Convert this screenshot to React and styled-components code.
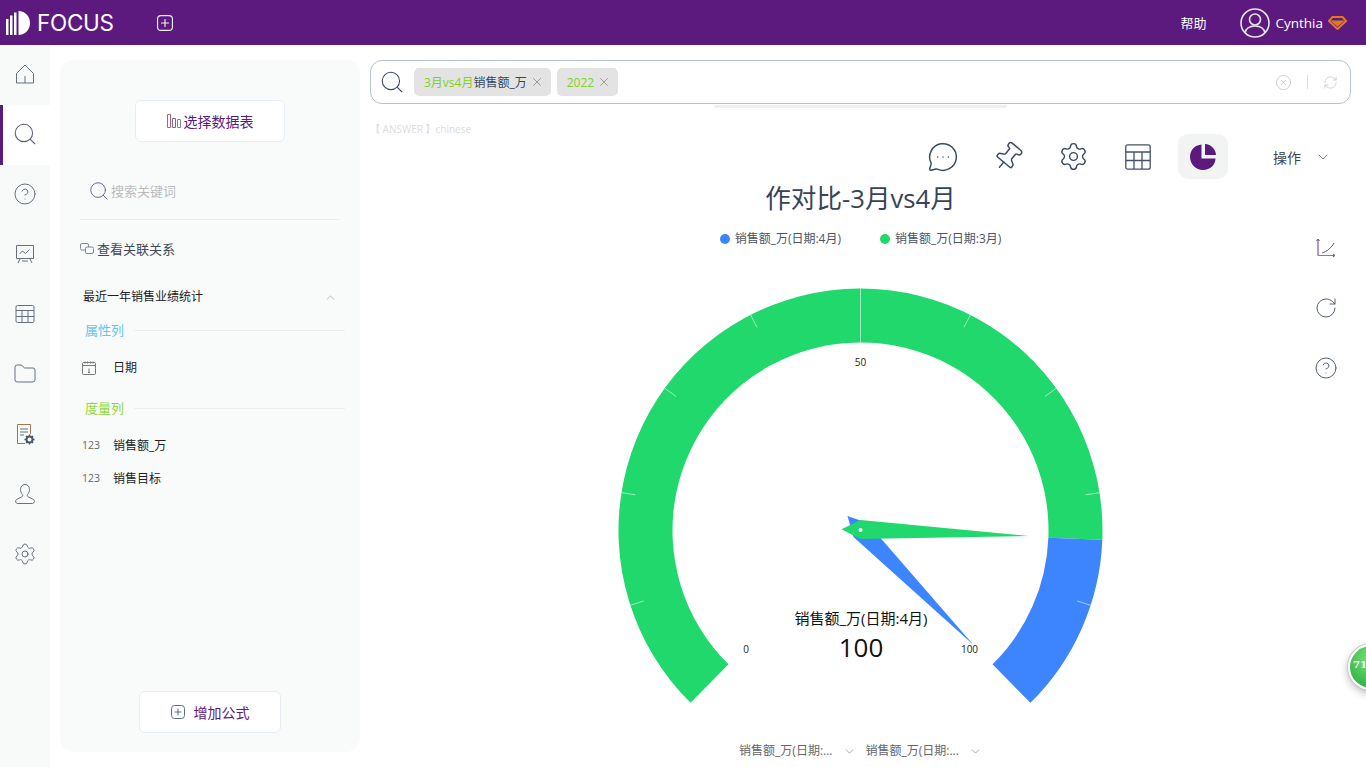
import React from 'react';
import styled, { createGlobalStyle } from 'styled-components';
import {
  ChevronDown,
  ChevronUp,
  CircleHelp,
  CircleX,
  Folder,
  MessageCircleMore,
  Pin,
  RefreshCw,
  RotateCw,
  Search,
  Settings,
  X,
} from 'lucide-react';

const GlobalStyle = createGlobalStyle`
  html, body {
    margin: 0;
    padding: 0;
    height: 100%;
    overflow: hidden;
    background: #fff;
    font-family: "Open Sans", "Noto Sans CJK SC", sans-serif;
  }
  * { box-sizing: border-box; }
`;

const HomeIcon = () => (
  <svg width="20" height="20" viewBox="0 0 20 20" fill="none" stroke="#66707e" strokeWidth="1">
    <path d="M1.5 9.5 10 1l8.5 8.5V19h-17z" />
    <path d="M10 12v7" />
  </svg>
);

const BoardIcon = () => (
  <svg width="20" height="20" viewBox="0 0 20 20" fill="none" stroke="#66707e" strokeWidth="1">
    <path d="M1.5 1.5h17v13h-17z" />
    <path d="M4.5 10l3-3 3 2.5 4-4" />
    <path d="M5 15l-2 4M15 15l2 4M7 17h6" />
  </svg>
);

const GridIcon = () => (
  <svg width="20" height="20" viewBox="0 0 20 20" fill="none" stroke="#66707e" strokeWidth="1">
    <rect x="1" y="1.5" width="18" height="17" rx="1.5" />
    <path d="M1 6.5h18M1 12.5h18M7 6.5v12M13 6.5v12" />
  </svg>
);

const ReportIcon = () => (
  <svg width="20" height="22" viewBox="0 0 20 22" fill="none" stroke="#66707e" strokeWidth="1">
    <path d="M10 20.5H2.5v-19h13V11" stroke="#a2734f" />
    <path d="M5 6h8M5 9h8M5 12h4" />
    <circle cx="14.5" cy="16.5" r="3" strokeWidth="2" stroke="#4d5764" />
    <path d="M14.5 11.500v2M14.500 19.500v2M9.500 16.500h2M17.500 16.500h2M11 13l1.400 1.400M16.600 18.600l1.400 1.400M11 20l1.400-1.400M16.600 14.400l1.400-1.400" stroke="#4d5764" strokeWidth="1.400" />
  </svg>
);

const UserIcon = () => (
  <svg width="22" height="22" viewBox="0 0 22 22" fill="none" stroke="#66707e" strokeWidth="1">
    <path d="M11 1.5c-3 0-4.5 2.4-4.5 5 0 2 .8 3.6 2 5 .4.8.2 1.8-.6 2.3L2.5 16.500c-1.500 1-1.200 3.800 1 4h15c2.200-.2 2.500-3 1-4l-5.400-2.700c-.8-.5-1-1.500-.6-2.300 1.200-1.400 2-3 2-5 0-2.600-1.500-5-4.500-5z" />
  </svg>
);

const BarsIcon = () => (
  <svg width="14" height="14" viewBox="0 0 14 14" fill="none" strokeWidth="1">
    <path d="M.5 .5h3v13h-3z" stroke="#b5616f" />
    <path d="M5.500 4.500h3v9h-3z" stroke="#7a6a9a" />
    <path d="M10.500 5.500h3v8h-3z" stroke="#8a7fa0" />
  </svg>
);

const PlusBox = ({ size = 14, color = '#5d6b86' }) => (
  <svg width={size} height={size} viewBox="0 0 14 14" fill="none" stroke={color} strokeWidth="1">
    <rect x=".5" y=".5" width="13" height="13" rx="3" />
    <path d="M7 3.500v7M3.500 7h7" />
  </svg>
);

const LinkIcon = () => (
  <svg width="14" height="12" viewBox="0 0 14 12" fill="none" stroke="#7d8794" strokeWidth="1">
    <rect x=".5" y=".5" width="8" height="6.500" rx="1.500" />
    <rect x="5.500" y="4" width="8" height="6.500" rx="1.500" fill="#f9fbfb" />
  </svg>
);

const CalendarIcon = () => (
  <svg width="14" height="14" viewBox="0 0 14 14" fill="none" stroke="#777" strokeWidth="1">
    <rect x=".5" y="1.500" width="13" height="12" rx="1" />
    <path d="M.5 4.500h13M3 .5v2M5.500 .5v2M8.500 .5v2M11 .5v2M7 7.500v4M6 11.500h2" />
  </svg>
);

const AxesIcon = () => (
  <svg width="20" height="24" viewBox="0 -2 20 24" fill="none" strokeWidth="1">
    <path d="M2 1v16.500" stroke="#6a2c8c" />
    <path d="M2 17.500h17" stroke="#7d7f90" />
    <path d="M.5 3 2 1l1.500 2M17 16l2 1.500-2 1.500" stroke="#55607a" />
    <path d="M6 15c5-1.500 10-6 12-10" stroke="#55607a" />
  </svg>
);

const TableIcon = () => (
  <svg width="26" height="26" viewBox="0 0 26 26" fill="none" stroke="#46506a" strokeWidth="1.300">
    <rect x=".8" y=".8" width="24.400" height="24.400" rx="2" />
    <path d="M.8 8h24.400M.8 16.500h24.400M9 8v17M17 8v17" />
  </svg>
);

const PieIcon = () => (
  <svg width="26" height="26" viewBox="0 0 26 26" fill="#5c1a7e">
    <path d="M11.500 0.500v14h14C25.500 21 20 26 13 26 6 26 0 20 0 13 0 6 5 1 11.500 .5z" />
    <path d="M15 0c6 .5 10.500 5 11 11H15z" />
  </svg>
);

const LogoMark = () => (
  <svg width="24" height="24" viewBox="0 0 24 24" fill="#fff">
    <path d="M0 8h2.500v16H0zM4 4.500h2.500V24H4zM8 1.500h2.500V24H8z" />
    <path d="M12.500 0c6.500 0 11.500 5.200 11.500 12s-5 12-11.500 12z" />
  </svg>
);

const AvatarIcon = () => (
  <svg width="30" height="30" viewBox="0 0 30 30" fill="none" stroke="#e8e4ee" strokeWidth="1.600">
    <circle cx="15" cy="15" r="14" />
    <circle cx="15" cy="11.500" r="5.500" />
    <path d="M5 25c1-5 5-7 10-7s9 2 10 7" />
  </svg>
);

const DiamondIcon = () => (
  <svg width="19" height="14" viewBox="0 0 19 14" fill="none" stroke="#e0791b" strokeWidth="2">
    <path d="M4.500 1h10L18 5l-8.500 8L1 5z" />
    <path d="M5 5.500h9l-4.500 4z" fill="#e0791b" />
  </svg>
);

const navItems = [
  { key: 'home', icon: <HomeIcon /> },
  { key: 'search', icon: <Search size={26} strokeWidth={1} color="#5a5f86" />, active: true },
  { key: 'help', icon: <CircleHelp size={24} strokeWidth={1} color="#66707e" /> },
  { key: 'board', icon: <BoardIcon /> },
  { key: 'grid', icon: <GridIcon /> },
  { key: 'folder', icon: <Folder size={24} strokeWidth={1} color="#66707e" /> },
  { key: 'report', icon: <ReportIcon /> },
  { key: 'user', icon: <UserIcon /> },
  { key: 'settings', icon: <Settings size={24} strokeWidth={1} color="#66707e" /> },
];

const CX = 259.5;
const CY = 260.5;
const OUTER = 242;
const INNER = 188;

const polar = (r, deg) => {
  const a = (deg * Math.PI) / 180;
  return [CX + r * Math.cos(a), CY - r * Math.sin(a)];
};

const bandPath = (from, to) => {
  const [x1, y1] = polar(OUTER, from);
  const [x2, y2] = polar(OUTER, to);
  const [x3, y3] = polar(INNER, to);
  const [x4, y4] = polar(INNER, from);
  const large = from - to > 180 ? 1 : 0;
  return `M${x1} ${y1}A${OUTER} ${OUTER} 0 ${large} 1 ${x2} ${y2}L${x3} ${y3}A${INNER} ${INNER} 0 ${large} 0 ${x4} ${y4}Z`;
};

const ticks = [1, 2, 3, 4, 6, 7, 8, 9].map((i) => 225 - i * 27);

const Gauge = () => {
  const [tx, ty] = polar(OUTER, 90);
  const [bx, by] = polar(INNER, 90);
  return (
    <GaugeSvg viewBox="0 0 520 460">
      <path d={bandPath(225.4, -2.2)} fill="#20d86c" />
      <path d={bandPath(-2.2, -45.4)} fill="#3d85ff" />
      <line x1={tx} y1={ty} x2={bx} y2={by} stroke="#fff" strokeOpacity=".55" />
      {ticks.map((deg) => {
        const [x1, y1] = polar(OUTER, deg);
        const [x2, y2] = polar(OUTER - 14, deg);
        return <line key={deg} x1={x1} y1={y1} x2={x2} y2={y2} stroke="#fff" strokeOpacity=".55" />;
      })}
      <polygon points="246.500,246 266.500,253 372.500,375 252.500,267" fill="#3d85ff" />
      <polygon points="240.500,259.300 259.500,250 427.500,266 259.500,269" fill="#20d86c" />
      <circle cx={CX} cy="260" r="2" fill="#fff" />
      <GaugeTick x="259.500" y="96">50</GaugeTick>
      <GaugeTick x="145" y="383">0</GaugeTick>
      <GaugeTick x="368.500" y="383">100</GaugeTick>
      <GaugeName x="260" y="354">销售额_万(日期:4月)</GaugeName>
      <GaugeValue x="260" y="387">100</GaugeValue>
    </GaugeSvg>
  );
};

const App = () => (
  <Page>
    <GlobalStyle />
    <Header>
      <LogoMark />
      <LogoText>FOCUS</LogoText>
      <NewTab>
        <PlusBox size={16} color="#f2edf6" />
      </NewTab>
      <HeaderRight>
        <HelpLink>帮助</HelpLink>
        <AvatarIcon />
        <UserName>Cynthia</UserName>
        <DiamondIcon />
      </HeaderRight>
    </Header>

    <Body>
      <NavRail>
        {navItems.map((item) => (
          <NavItem key={item.key} $active={item.active}>
            {item.icon}
          </NavItem>
        ))}
      </NavRail>

      <SidePanel>
        <OutlineButton $width={150} $gap={3}>
          <BarsIcon />
          选择数据表
        </OutlineButton>
        <KeywordSearch>
          <Search size={22} strokeWidth={1} color="#5a5f86" />
          <span>搜索关键词</span>
        </KeywordSearch>
        <RelationLink>
          <LinkIcon />
          查看关联关系
        </RelationLink>
        <TableHead>
          最近一年销售业绩统计
          <ChevronUp size={13} strokeWidth={1} color="#888" />
        </TableHead>
        <GroupHead $color="#62c6f0" $top={15}>属性列</GroupHead>
        <FieldRow $top={18}>
          <FieldType>
            <CalendarIcon />
          </FieldType>
          日期
        </FieldRow>
        <GroupHead $color="#8fd93f" $top={21}>度量列</GroupHead>
        <FieldRow $top={18}>
          <FieldType>123</FieldType>
          销售额_万
        </FieldRow>
        <FieldRow $top={12}>
          <FieldType>123</FieldType>
          销售目标
        </FieldRow>
        <AddFormula>
          <OutlineButton $width={142} $gap={9}>
            <PlusBox />
            增加公式
          </OutlineButton>
        </AddFormula>
      </SidePanel>

      <Main>
        <SearchBox>
          <Search size={26} strokeWidth={1} color="#3f4a6a" />
          <Chip>
            <span>
              <ChipAccent>3月vs4月</ChipAccent>销售额_万
            </span>
            <X size={14} strokeWidth={1} color="#666" />
          </Chip>
          <Chip>
            <ChipAccent>2022</ChipAccent>
            <X size={14} strokeWidth={1} color="#666" />
          </Chip>
          <SearchTools>
            <CircleX size={17} strokeWidth={1} color="#bbb" />
            <ToolDivider />
            <RefreshCw size={15} strokeWidth={1} color="#bbb" />
          </SearchTools>
        </SearchBox>
        <SuggestLine />
        <AnswerTag>【 ANSWER 】chinese</AnswerTag>

        <Toolbar>
          <ToolButton>
            <MessageCircleMore size={32} strokeWidth={1.100} color="#3a4a60" />
          </ToolButton>
          <ToolButton>
            <PinTilted>
              <Pin size={32} strokeWidth={1.100} color="#3a4a60" />
            </PinTilted>
          </ToolButton>
          <ToolButton>
            <Settings size={31} strokeWidth={1.100} color="#3a4a60" />
          </ToolButton>
          <ToolButton>
            <TableIcon />
          </ToolButton>
          <ToolButton $active>
            <PieIcon />
          </ToolButton>
          <ActionMenu>
            操作
            <ChevronDown size={16} strokeWidth={1} color="#444" />
          </ActionMenu>
        </Toolbar>

        <ChartArea>
          <ChartTitle>作对比-3月vs4月</ChartTitle>
          <Legend>
            <LegendItem $color="#3d85ff">销售额_万(日期:4月)</LegendItem>
            <LegendItem $color="#20d86c">销售额_万(日期:3月)</LegendItem>
          </Legend>
          <Gauge />
          <SelectRow>
            <SeriesSelect>
              <span>销售额_万(日期:...</span>
              <ChevronDown size={13} strokeWidth={1} color="#666" />
            </SeriesSelect>
            <SeriesSelect>
              <span>销售额_万(日期:...</span>
              <ChevronDown size={13} strokeWidth={1} color="#666" />
            </SeriesSelect>
          </SelectRow>
          <ChartRail>
            <AxesIcon />
            <RotateCw size={24} strokeWidth={1} color="#55607a" />
            <CircleHelp size={24} strokeWidth={1} color="#55607a" />
          </ChartRail>
        </ChartArea>
      </Main>
    </Body>

    <ScoreBadge>71</ScoreBadge>
  </Page>
);

export default App;

const Page = styled.div`
  position: relative;
  width: 1366px;
  height: 767px;
  overflow: hidden;
  background: #fff;
`;

const Header = styled.header`
  display: flex;
  align-items: center;
  height: 45px;
  padding: 0 19px 0 6px;
  background: #5c1a7e;
  color: #fff;
`;

const LogoText = styled.span`
  margin-left: 7px;
  font-family: "Inter", sans-serif;
  font-size: 22.500px;
  font-weight: 400;
  letter-spacing: -0.3px;
`;

const NewTab = styled.span`
  display: flex;
  margin-left: 43px;
`;

const HeaderRight = styled.div`
  display: flex;
  align-items: center;
  margin-left: auto;
`;

const HelpLink = styled.span`
  margin-right: 34px;
  font-size: 13px;
`;

const UserName = styled.span`
  margin: 0 5px;
  font-size: 13.500px;
`;

const Body = styled.div`
  display: flex;
  height: 722px;
`;

const NavRail = styled.nav`
  flex: 0 0 50px;
  background: #f8fafa;
`;

const NavItem = styled.div`
  display: flex;
  align-items: center;
  justify-content: center;
  height: 60px;
  padding-bottom: 2px;
  background: ${(p) => (p.$active ? '#fff' : 'transparent')};
  border-left: 3px solid ${(p) => (p.$active ? '#5c1a7e' : 'transparent')};
  border-right: 3px solid transparent;
`;

const SidePanel = styled.aside`
  display: flex;
  flex-direction: column;
  flex: 0 0 300px;
  height: 692px;
  margin: 15px 10px 0;
  padding: 40px 20px 19px;
  background: #f9fbfb;
  border-radius: 14px;
`;

const OutlineButton = styled.div`
  display: flex;
  align-items: center;
  justify-content: center;
  gap: ${(p) => p.$gap}px;
  width: ${(p) => p.$width}px;
  height: 42px;
  padding-bottom: 1px;
  background: #fff;
  border: 1px solid #e8edf5;
  border-radius: 6px;
  color: #5c1a7e;
  font-size: 14px;
  align-self: center;
`;

const KeywordSearch = styled.div`
  display: flex;
  align-items: center;
  gap: 1px;
  width: 260px;
  height: 78px;
  padding: 20px 0 0 8px;
  border-bottom: 1px solid #e9eef0;
  color: #bbb;
  font-size: 13px;
`;

const RelationLink = styled.div`
  display: flex;
  align-items: center;
  gap: 3px;
  margin-top: 20px;
  color: #3f4a58;
  font-size: 13px;
  line-height: 18px;
`;

const TableHead = styled.div`
  display: flex;
  align-items: center;
  justify-content: space-between;
  width: 254px;
  margin: 30px 0 0 3px;
  color: #222;
  font-size: 12px;
  line-height: 18px;
`;

const GroupHead = styled.div`
  display: flex;
  align-items: center;
  gap: 10px;
  margin: ${(p) => p.$top}px -5px 0 5px;
  color: ${(p) => p.$color};
  font-size: 13px;
  line-height: 18px;

  &::after {
    content: '';
    flex: 1;
    height: 1px;
    background: #e9eef0;
  }
`;

const FieldRow = styled.div`
  display: flex;
  align-items: center;
  margin: ${(p) => p.$top}px 0 0 2px;
  color: #222;
  font-size: 12px;
  line-height: 21px;
`;

const FieldType = styled.span`
  display: flex;
  width: 31px;
  color: #666;
  font-size: 10.500px;
`;

const AddFormula = styled.div`
  display: flex;
  justify-content: center;
  margin-top: auto;
`;

const Main = styled.main`
  position: relative;
  flex: 0 0 981px;
  display: flex;
  flex-direction: column;
  padding-top: 15px;
`;

const SearchBox = styled.div`
  display: flex;
  align-items: center;
  gap: 6px;
  height: 44px;
  padding: 0 12px 0 8px;
  background: #fff;
  border: 1px solid #b5c3d1;
  border-radius: 12px;
`;

const Chip = styled.span`
  display: flex;
  align-items: center;
  gap: 3px;
  height: 28px;
  padding: 0 7px 0 10px;
  background: #e3e3e3;
  border-radius: 5px;
  color: #3a4656;
  font-size: 12px;

  &:first-of-type {
    margin-left: 3px;
  }
`;

const ChipAccent = styled.span`
  color: #7ed321;
`;

const SearchTools = styled.div`
  display: flex;
  align-items: center;
  gap: 15px;
  margin-left: auto;
`;

const ToolDivider = styled.span`
  width: 1px;
  height: 14px;
  background: #ddd;
`;

const SuggestLine = styled.div`
  width: 293px;
  height: 3px;
  margin: 1px 0 0 344px;
  background: #f0f0f0;
  border-radius: 2px;
`;

const AnswerTag = styled.div`
  margin-top: 13px;
  color: #dcdcdc;
  font-size: 10px;
  line-height: 16px;
`;

const Toolbar = styled.div`
  display: flex;
  align-items: center;
  height: 45px;
  margin-top: -3px;
  padding-left: 548px;
  gap: 15px;
`;

const ToolButton = styled.span`
  display: flex;
  align-items: center;
  justify-content: center;
  width: 50px;
  height: 45px;
  background: ${(p) => (p.$active ? '#f2f4f4' : 'transparent')};
  border-radius: 10px;
`;

const PinTilted = styled.span`
  display: flex;
  transform: rotate(40deg);
`;

const ActionMenu = styled.span`
  display: flex;
  align-items: center;
  gap: 14px;
  margin-left: 30px;
  color: #3a4656;
  font-size: 14px;
`;

const ChartArea = styled.section`
  position: relative;
  display: flex;
  flex-direction: column;
  align-items: center;
`;

const ChartTitle = styled.h2`
  margin: 3px 0 0;
  color: #36445a;
  font-size: 25.600px;
  font-weight: 400;
  line-height: 34px;
`;

const Legend = styled.div`
  display: flex;
  gap: 39px;
  margin-top: 15px;
`;

const LegendItem = styled.span`
  display: flex;
  align-items: center;
  gap: 5px;
  color: #4a5568;
  font-size: 12px;
  line-height: 16px;

  &::before {
    content: '';
    width: 10px;
    height: 10px;
    border-radius: 50%;
    background: ${(p) => p.$color};
  }
`;

const GaugeSvg = styled.svg`
  display: block;
  width: 520px;
  height: 460px;
  margin-top: 23px;
  flex: none;
`;

const GaugeTick = styled.text`
  fill: #222;
  font-size: 10px;
  text-anchor: middle;
`;

const GaugeName = styled.text`
  fill: #111;
  font-size: 15px;
  text-anchor: middle;
`;

const GaugeValue = styled.text`
  fill: #111;
  font-size: 26px;
  text-anchor: middle;
`;

const SelectRow = styled.div`
  display: flex;
  gap: 10px;
  margin-top: 12px;
`;

const SeriesSelect = styled.span`
  display: flex;
  align-items: center;
  gap: 10px;
  color: #666;
  font-size: 12px;
  line-height: 18px;
`;

const ChartRail = styled.div`
  position: absolute;
  top: 57px;
  right: 13px;
  display: flex;
  flex-direction: column;
  align-items: center;
  gap: 36px;
`;

const ScoreBadge = styled.div`
  position: absolute;
  left: 1348px;
  top: 644px;
  width: 46px;
  height: 46px;
  padding: 13px 0 0 3px;
  border: 2px solid #fff;
  border-radius: 50%;
  background: radial-gradient(circle at 50% 30%, #7be07b, #3cb94c 70%);
  box-shadow: 0 0 0 1px #c4c4c4, 0 3px 8px rgba(0, 0, 0, 0.3);
  color: #fff;
  font-family: "DejaVu Serif", serif;
  font-size: 10px;
  font-weight: 700;
`;
